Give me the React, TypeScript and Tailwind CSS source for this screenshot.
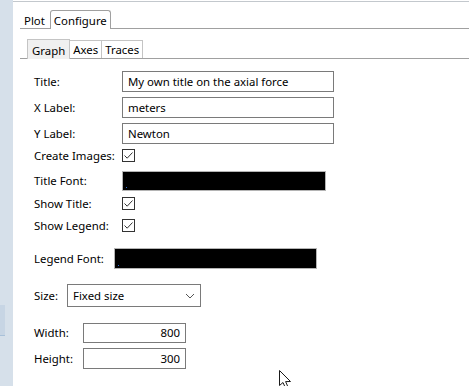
import React from 'react';

function Check() {
  return (
    <div className="w-[13px] h-[13px] border border-[#333333] bg-white flex items-center justify-center">
      <svg width="11" height="11" viewBox="0 0 11 11">
        <path d="M1.5 5.5 L4.2 8.2 L9.5 2.5" fill="none" stroke="#333333" strokeWidth="1" />
      </svg>
    </div>
  );
}

function FontBox({ w }: { w: string }) {
  return (
    <div className={`relative h-[20px] bg-black border border-[#b4b4b4] ${w}`}>
      <div className="absolute left-[3px] bottom-[2px] w-px h-px bg-[#2f6bd1]" />
    </div>
  );
}

export default function App() {
  return (
    <div
      className="relative w-[469px] h-[386px] bg-white flex overflow-hidden text-[11.4px] text-black"
      style={{ fontFamily: '"Noto Sans", "Open Sans", sans-serif' }}
    >
      {/* left strip */}
      <div className="w-[13px] h-full bg-[#d6e0ea] relative shrink-0">
        <div className="absolute left-0 top-[305px] w-[5px] h-[31px] bg-[#c7d5e4] border-b border-[#a9c1d9]" />
      </div>

      <div className="flex-1 flex flex-col">
        <div className="h-px mt-px bg-[#c3c8cd]" />

        {/* outer tabs */}
        <div className="flex items-end h-[27px] ml-[7px] border-b border-[#a0a0a0] leading-none">
          <div className="h-[18px] pl-[4px] pr-[5px] pb-[2px] flex items-end">Plot</div>
          <div className="h-[19px] -mb-px px-[3px] pb-[3px] flex items-end bg-white border border-b-0 border-[#a0a0a0] rounded-t-[3px]">
            Configure
          </div>
        </div>

        {/* inner tabs */}
        <div className="flex items-end h-[30px] ml-[7px] border-b border-[#a0a0a0] leading-none">
          <div className="w-[7px]" />
          <div className="h-[20px] -mb-px px-[4px] pb-[3px] flex items-end bg-[#f0f0f0] border border-b-0 border-[#c4c4c4]">
            Graph
          </div>
          <div className="h-[18px] px-[3px] pb-[3px] flex items-end border-r border-t border-[#c4c4c4]">Axes</div>
          <div className="h-[18px] px-[3px] pb-[3px] flex items-end border-r border-t border-[#c4c4c4]">Traces</div>
        </div>

        {/* form */}
        <div className="flex flex-col pl-[21px] pt-[12px]">
          <div className="flex items-center h-[21px]">
            <div className="w-[88px]">Title:</div>
            <div className="w-[212px] h-[21px] border border-[#7a7a7a] pl-[5px] flex items-center">
              My own title on the axial force
            </div>
          </div>
          <div className="flex items-center h-[21px] mt-[5px]">
            <div className="w-[88px]">X Label:</div>
            <div className="w-[212px] h-[21px] border border-[#7a7a7a] pl-[5px] flex items-center">meters</div>
          </div>
          <div className="flex items-center h-[21px] mt-[5px]">
            <div className="w-[88px]">Y Label:</div>
            <div className="w-[212px] h-[21px] border border-[#7a7a7a] pl-[5px] flex items-center">Newton</div>
          </div>
          <div className="flex items-center h-[13px] mt-[5px]">
            <div className="w-[88px]">Create Images:</div>
            <Check />
          </div>
          <div className="flex items-center h-[20px] mt-[9px]">
            <div className="w-[88px]">Title Font:</div>
            <FontBox w="w-[204px]" />
          </div>
          <div className="flex items-center h-[13px] mt-[6px]">
            <div className="w-[88px]">Show Title:</div>
            <Check />
          </div>
          <div className="flex items-center h-[13px] mt-[9px]">
            <div className="w-[88px]">Show Legend:</div>
            <Check />
          </div>
          <div className="flex items-center h-[21px] mt-[16px]">
            <div className="w-[80px]">Legend Font:</div>
            <div className="h-[21px] flex"><FontBox w="w-[203px] h-[21px]" /></div>
          </div>
          <div className="flex items-center h-[23px] mt-[15px]">
            <div className="w-[33px]">Size:</div>
            <div className="w-[134px] h-[23px] border border-[#7a7a7a] pl-[5px] pr-[5px] flex items-center justify-between">
              <span>Fixed size</span>
              <svg width="10" height="6" viewBox="0 0 10 6">
                <path d="M1 1 L5 5 L9 1" fill="none" stroke="#555555" strokeWidth="1" />
              </svg>
            </div>
          </div>
          <div className="flex items-center h-[20px] mt-[16px]">
            <div className="w-[49px]">Width:</div>
            <div className="w-[103px] h-[20px] border border-[#7a7a7a] pr-[5px] flex items-center justify-end">800</div>
          </div>
          <div className="flex items-center h-[21px] mt-[5px]">
            <div className="w-[49px]">Height:</div>
            <div className="w-[103px] h-[21px] border border-[#7a7a7a] pr-[5px] flex items-center justify-end">300</div>
          </div>
        </div>
      </div>

      {/* mouse cursor */}
      <svg className="absolute left-[279px] top-[370px]" width="14" height="20" viewBox="0 0 14 20">
        <path d="M0.5 0.5 L0.5 15.5 L4 12.5 L6.5 18 L9 17 L6.6 11.6 L11.5 11.5 Z" fill="white" stroke="#1a1a1a" strokeWidth="1" />
      </svg>
    </div>
  );
}
